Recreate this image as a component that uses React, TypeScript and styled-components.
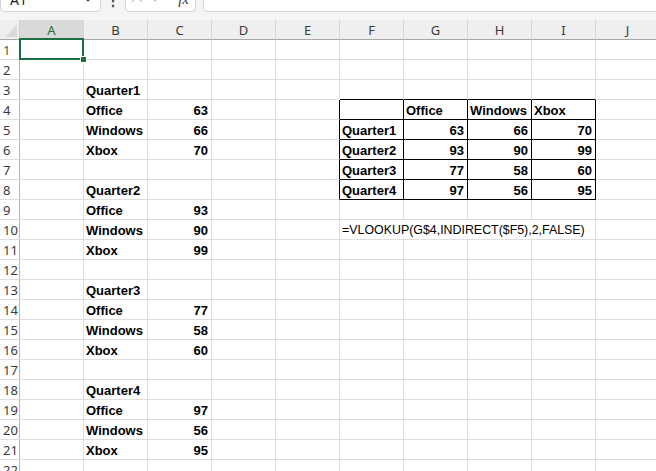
import React from "react";
import styled, { createGlobalStyle } from "styled-components";

const Global = createGlobalStyle`
  html, body { margin: 0; padding: 0; background: #ffffff; overflow: hidden; }
  body { width: 656px; height: 471px; font-family: "Liberation Sans", Arial, sans-serif; }
`;

const Page = styled.div`
  width: 656px;
  height: 471px;
  overflow: hidden;
  background: #ffffff;
`;

const Toolbar = styled.div`
  height: 20px;
  background: #f5f5f5;
  display: flex;
  align-items: flex-start;
  overflow: hidden;
`;

const NameBox = styled.div`
  margin-top: -14px;
  width: 101px;
  height: 26px;
  box-sizing: border-box;
  background: #fff;
  border: 1px solid #d4d4d4;
  border-radius: 4px;
  display: flex;
  align-items: center;
  justify-content: space-between;
  padding: 0 6px 0 9px;
  font-family: "Noto Sans", sans-serif;
  font-size: 14px;
  color: #222;
`;

const Dots = styled.div`
  width: 24px;
  text-align: center;
  font-family: "Noto Sans", sans-serif;
  font-size: 14px;
  line-height: 14px;
  margin-top: -6px;
  color: #444;
  font-weight: bold;
`;

const FxBox = styled.div`
  margin-top: -14px;
  width: 71px;
  height: 26px;
  box-sizing: border-box;
  background: #fff;
  border: 1px solid #d4d4d4;
  border-radius: 4px;
  display: flex;
  align-items: center;
  padding: 0 6px 0 5px;
  gap: 6px;
`;

const Fx = styled.span`
  font-family: "Liberation Serif", serif;
  font-style: italic;
  font-size: 15px;
  color: #333;
  margin-left: auto;
`;

const FormulaBox = styled.div`
  margin-top: -14px;
  margin-left: 7px;
  flex: 1;
  height: 26px;
  box-sizing: border-box;
  background: #fff;
  border: 1px solid #d4d4d4;
  border-radius: 4px;
  margin-right: -10px;
`;

const Sheet = styled.div`
  position: relative;
  display: grid;
  grid-template-columns: 20px repeat(10, 64px);
  grid-template-rows: 20px;
  grid-auto-rows: 20px;
`;

const Corner = styled.div`
  background: #efefef;
  border-right: 1px solid #d0d0d0;
  border-bottom: 1px solid #a8a8a8;
  box-sizing: border-box;
  position: relative;
`;

const CornerTri = styled.div`
  position: absolute;
  right: 2px;
  bottom: 2px;
  width: 0;
  height: 0;
  border-left: 12px solid transparent;
  border-bottom: 12px solid #dadada;
`;

const ColHead = styled.div<{ $sel?: boolean }>`
  box-sizing: border-box;
  background: ${(p) => (p.$sel ? "#d9d9d9" : "#efefef")};
  border-right: 1px solid #d6d6d6;
  border-bottom: 1px solid #a8a8a8;
  display: flex;
  align-items: center;
  justify-content: center;
  font-family: "Noto Sans", sans-serif;
  font-size: 13px;
  color: ${(p) => (p.$sel ? "#1e6e43" : "#3a3a3a")};
`;

const RowHead = styled.div<{ $sel?: boolean }>`
  box-sizing: border-box;
  background: #ffffff;
  border-right: 1px solid #b8b8b8;
  border-bottom: 1px solid #dedede;
  display: flex;
  align-items: center;
  padding-left: 3px;
  font-family: "Noto Sans", sans-serif;
  font-size: 13px;
  color: ${(p) => (p.$sel ? "#1e6e43" : "#3a3a3a")};
`;

const Cell = styled.div<{
  $bold?: boolean;
  $right?: boolean;
  $br?: boolean;
  $bb?: boolean;
  $span?: number;
}>`
  box-sizing: border-box;
  border-right: 1px solid ${(p) => (p.$br ? "#000" : "#dedede")};
  border-bottom: 1px solid ${(p) => (p.$bb ? "#000" : "#dedede")};
  ${(p) => (p.$span ? `grid-column: span ${p.$span};` : "")}
  display: flex;
  align-items: flex-end;
  justify-content: ${(p) => (p.$right ? "flex-end" : "flex-start")};
  padding: 0 3px 1px 2px;
  font-family: "Liberation Sans", Arial, sans-serif;
  font-size: ${(p) => (p.$bold ? "13px" : "12.4px")};
  font-weight: ${(p) => (p.$bold ? 700 : 400)};
  color: #000;
  white-space: nowrap;
  overflow: visible;
  line-height: 15px;
`;

const Selection = styled.div`
  position: absolute;
  left: 19px;
  top: 18px;
  width: 65px;
  height: 22px;
  box-sizing: border-box;
  border: 2px solid #1e6e43;
  pointer-events: none;
`;

const Handle = styled.div`
  position: absolute;
  left: 80px;
  top: 36px;
  width: 7px;
  height: 7px;
  box-sizing: border-box;
  background: #1e6e43;
  border: 1px solid #fff;
`;

const cols = ["A", "B", "C", "D", "E", "F", "G", "H", "I", "J"];

type CellData = { t: string; b?: boolean; r?: boolean; span?: number };

const data: Record<string, CellData> = {};
const quarters = [
  [63, 66, 70],
  [93, 90, 99],
  [77, 58, 60],
  [97, 56, 95],
];
const products = ["Office", "Windows", "Xbox"];
quarters.forEach((q, i) => {
  const start = 3 + i * 5;
  data[`B${start}`] = { t: `Quarter${i + 1}`, b: true };
  products.forEach((p, j) => {
    data[`B${start + 1 + j}`] = { t: p, b: true };
    data[`C${start + 1 + j}`] = { t: String(q[j]), b: true, r: true };
  });
  data[`F${5 + i}`] = { t: `Quarter${i + 1}`, b: true };
  ["G", "H", "I"].forEach((c, j) => {
    data[`${c}${5 + i}`] = { t: String(q[j]), b: true, r: true };
  });
});
data["G4"] = { t: "Office", b: true };
data["H4"] = { t: "Windows", b: true };
data["I4"] = { t: "Xbox", b: true };
data["F10"] = { t: "=VLOOKUP(G$4,INDIRECT($F5),2,FALSE)", span: 4 };

const tableCols = ["F", "G", "H", "I"];

const Chevron = ({ up, color }: { up?: boolean; color: string }) => (
  <svg width="12" height="8" viewBox="0 0 12 8" fill="none">
    <path
      d={up ? "M1 7 L6 2 L11 7" : "M1 1 L6 6 L11 1"}
      stroke={color}
      strokeWidth="1.2"
    />
  </svg>
);

export default function App() {
  const rows = Array.from({ length: 22 }, (_, i) => i + 1);
  return (
    <Page>
      <Global />
      <Toolbar>
        <NameBox>
          <span>A1</span>
          <Chevron color="#444" />
        </NameBox>
        <Dots>⋮</Dots>
        <FxBox>
          <Chevron up color="#c8c8c8" />
          <Chevron color="#c8c8c8" />
          <Fx>fx</Fx>
        </FxBox>
        <FormulaBox />
      </Toolbar>
      <Sheet>
        <Corner>
          <CornerTri />
        </Corner>
        {cols.map((c) => (
          <ColHead key={c} $sel={c === "A"}>
            {c}
          </ColHead>
        ))}
        {rows.map((r) => {
          const cells: React.ReactNode[] = [];
          let skip = 0;
          cols.forEach((c) => {
            if (skip > 0) {
              skip--;
              return;
            }
            const key = `${c}${r}`;
            const d = data[key];
            const inTableRows = r >= 4 && r <= 8;
            const inTableCols = tableCols.includes(c);
            const br = inTableRows && (inTableCols || c === "E");
            const bb = r >= 3 && r <= 8 && inTableCols;
            if (d?.span) skip = d.span - 1;
            cells.push(
              <Cell
                key={key}
                $bold={d?.b}
                $right={d?.r}
                $br={br}
                $bb={bb}
                $span={d?.span}
              >
                {d?.t}
              </Cell>
            );
          });
          return (
            <React.Fragment key={r}>
              <RowHead $sel={r === 1}>{r}</RowHead>
              {cells}
            </React.Fragment>
          );
        })}
        <Selection />
        <Handle />
      </Sheet>
    </Page>
  );
}
